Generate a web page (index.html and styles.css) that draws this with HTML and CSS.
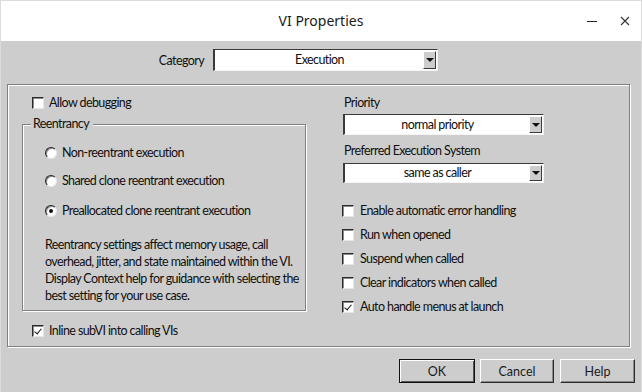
FILE: index.html
```html
<!DOCTYPE html>
<html lang="en">
<head>
    <meta charset="UTF-8">
    <title>VI Properties</title>
    <link rel="stylesheet" href="styles.css">
</head>
<body>

<div class="window">
    <div class="titlebar">
        <span class="title">VI Properties</span>
        <span class="win-btn">
            <svg width="12" height="12" viewBox="0 0 12 12"><line x1="1" y1="6.5" x2="11" y2="6.5" stroke="#222" stroke-width="1"/></svg>
        </span>
        <span class="win-btn">
            <svg width="12" height="12" viewBox="0 0 12 12"><path d="M2 2 L10 10 M10 2 L2 10" stroke="#333" stroke-width="1.1" fill="none"/></svg>
        </span>
    </div>

    <div class="client">
        <div class="category-row">
            <span class="category-label">Category</span>
            <div class="combo combo-category">
                <span class="combo-value">Execution</span>
                <span class="combo-arrow"></span>
            </div>
        </div>

        <div class="panel">
            <div class="col-left">
                <label class="check check-first"><span class="box"></span>Allow debugging</label>

                <div class="group">
                    <span class="group-title">Reentrancy</span>
                    <label class="radio radio-1"><span class="dot"></span>Non-reentrant execution</label>
                    <label class="radio radio-2"><span class="dot"></span>Shared clone reentrant execution</label>
                    <label class="radio radio-3"><span class="dot on"></span>Preallocated clone reentrant execution</label>
                    <p class="note">Reentrancy settings affect memory usage, call<br>overhead, jitter, and state maintained within the VI.<br>Display Context help for guidance with selecting the<br>best setting for your use case.</p>
                </div>

                <label class="check check-inline"><span class="box on"></span>Inline subVI into calling VIs</label>
            </div>

            <div class="col-right">
                <div class="field-label">Priority</div>
                <div class="combo combo-small combo-priority">
                    <span class="combo-value">normal priority</span>
                    <span class="combo-arrow"></span>
                </div>
                <div class="field-label field-label-2">Preferred Execution System</div>
                <div class="combo combo-small combo-system">
                    <span class="combo-value">same as caller</span>
                    <span class="combo-arrow"></span>
                </div>

                <div class="options">
                    <label class="check"><span class="box"></span>Enable automatic error handling</label>
                    <label class="check"><span class="box"></span>Run when opened</label>
                    <label class="check"><span class="box"></span>Suspend when called</label>
                    <label class="check"><span class="box"></span>Clear indicators when called</label>
                    <label class="check"><span class="box on"></span>Auto handle menus at launch</label>
                </div>
            </div>
        </div>

        <div class="buttons">
            <button class="btn btn-default">OK</button>
            <button class="btn">Cancel</button>
            <button class="btn btn-help">Help</button>
        </div>
    </div>
</div>

</body>
</html>
```

FILE: styles.css
```css
body {
    margin: 0;
    font-family: "Noto Sans", "Liberation Sans", sans-serif;
    color: #1b1b1b;
}
.window {
    width: 642px;
    height: 392px;
    box-sizing: border-box;
    border: 1px solid #dcdcdc;
    border-bottom: none;
    background: #cdcdcd;
    overflow: hidden;
}
.titlebar {
    height: 40px;
    background: #fff;
    position: relative;
    display: flex;
    justify-content: flex-end;
    align-items: center;
    padding-right: 10px;
    gap: 21px;
}
.title {
    position: absolute;
    left: 0;
    right: 0;
    top: 10px;
    text-align: center;
    font-size: 14px;
    line-height: 20px;
    color: #1a1a1a;
}
.win-btn {
    width: 12px;
    height: 12px;
    display: block;
    margin-top: -1px;
}
.win-btn svg {
    display: block;
}

.client {
    font-family: Lato, "Noto Sans", sans-serif;
    font-size: 12.5px;
    letter-spacing: -0.6px;
    color: #101010;
    padding-top: 8px;
}
.category-row {
    display: flex;
    align-items: center;
    height: 22px;
}
.category-label {
    width: 203px;
    text-align: right;
    margin-right: 9px;
}

/* sunken combo box */
.combo {
    box-sizing: border-box;
    background: #fff;
    border-top: 1px solid #3a3a3a;
    border-left: 2px solid #3a3a3a;
    border-right: 1px solid #f4f4f4;
    border-bottom: 1px solid #f4f4f4;
    display: flex;
    align-items: center;
    padding: 1px;
}
.combo-category {
    width: 225px;
    height: 22px;
}
.combo-value {
    flex: 1;
    text-align: center;
    line-height: 16px;
}
.combo-arrow {
    flex-shrink: 0;
    width: 13px;
    height: 100%;
    box-sizing: border-box;
    background: #cdcdcd;
    border-top: 1px solid #fff;
    border-left: 1px solid #fff;
    border-right: 1px solid #3a3a3a;
    border-bottom: 1px solid #3a3a3a;
    position: relative;
}
.combo-arrow::after {
    content: "";
    position: absolute;
    left: 2px;
    top: 50%;
    margin-top: -2px;
    border-left: 4px solid transparent;
    border-right: 4px solid transparent;
    border-top: 4px solid #111;
}

/* etched panel */
.panel {
    box-sizing: border-box;
    margin: 13px 0 0 6px;
    width: 623px;
    height: 263px;
    border: 1px solid #808080;
    box-shadow: inset 1px 1px 0 #fff, 1px 1px 0 #fff;
    display: grid;
    grid-template-columns: 298px 1fr;
    column-gap: 37px;
}
.col-left {
    padding-left: 14px;
}

.check, .radio {
    display: flex;
    align-items: center;
    height: 16px;
    line-height: 16px;
    white-space: nowrap;
}
.box {
    flex-shrink: 0;
    width: 12px;
    height: 12px;
    box-sizing: border-box;
    background: #fff;
    border-top: 1px solid #2a2a2a;
    border-left: 1px solid #2a2a2a;
    border-right: 1px solid #e6e6e6;
    border-bottom: 1px solid #e6e6e6;
    box-shadow: inset 1px 1px 0 #8a8a8a;
    margin-right: 5px;
    position: relative;
}
.box.on::after {
    content: "";
    position: absolute;
    left: 3px;
    top: 1px;
    width: 3px;
    height: 6px;
    border-right: 1px solid #111;
    border-bottom: 1px solid #111;
    transform: rotate(40deg);
}
.check-first {
    margin: 10px 0 0 10px;
}
.check-inline {
    margin: 12px 0 0 10px;
}

/* group box */
.group {
    position: relative;
    box-sizing: border-box;
    margin-top: 13px;
    width: 284px;
    height: 187px;
    border: 1px solid #808080;
    box-shadow: inset 1px 1px 0 #fff, 1px 1px 0 #fff;
    padding-left: 22px;
}
.group-title {
    position: absolute;
    left: 8px;
    top: -9px;
    padding: 0 4px 0 2px;
    background: #cdcdcd;
    line-height: 16px;
}
.dot {
    flex-shrink: 0;
    width: 12px;
    height: 12px;
    box-sizing: border-box;
    border-radius: 50%;
    background: #fff;
    border: 1px solid;
    border-color: #222 #e8e8e8 #e8e8e8 #222;
    box-shadow: inset 1px 1px 0 #8a8a8a;
    margin-right: 5px;
    position: relative;
}
.dot.on::after {
    content: "";
    position: absolute;
    left: 3px;
    top: 3px;
    width: 4px;
    height: 4px;
    border-radius: 50%;
    background: #111;
}
.radio-1 {
    margin-top: 20px;
}
.radio-2 {
    margin-top: 12px;
}
.radio-3 {
    margin-top: 14px;
}
.note {
    margin: 17px 0 0 0;
    line-height: 17px;
    white-space: nowrap;
}

.col-right {
    padding-top: 10px;
}
.field-label {
    line-height: 16px;
    padding-left: 1px;
}
.field-label-2 {
    margin-top: 8px;
}
.combo-small {
    width: 201px;
    height: 20px;
}
.combo-priority {
    margin-top: 3px;
    height: 21px;
}
.combo-system {
    margin-top: 4px;
}
.options {
    margin-top: 20px;
    margin-left: -1px;
    display: flex;
    flex-direction: column;
    align-items: flex-start;
    gap: 8px;
}
.options .box {
    margin-right: 6px;
}

.buttons {
    display: flex;
    justify-content: flex-end;
    gap: 6px;
    margin-top: 12px;
    padding-right: 6px;
}
.btn {
    font: inherit;
    color: #1b1b1b;
    width: 74px;
    height: 24px;
    padding: 0;
    background: #cdcdcd;
    border-top: 1px solid #fff;
    border-left: 1px solid #fff;
    border-right: 1px solid #2a2a2a;
    border-bottom: 1px solid #2a2a2a;
    box-shadow: inset -1px -1px 0 #8a8a8a;
}
.btn-default {
    width: 76px;
    margin-right: -1px;
    border: 1px solid #111;
    box-shadow: inset 1px 1px 0 #fff, inset -1px -1px 0 #555;
}
.btn-help {
    width: 75px;
}
```
